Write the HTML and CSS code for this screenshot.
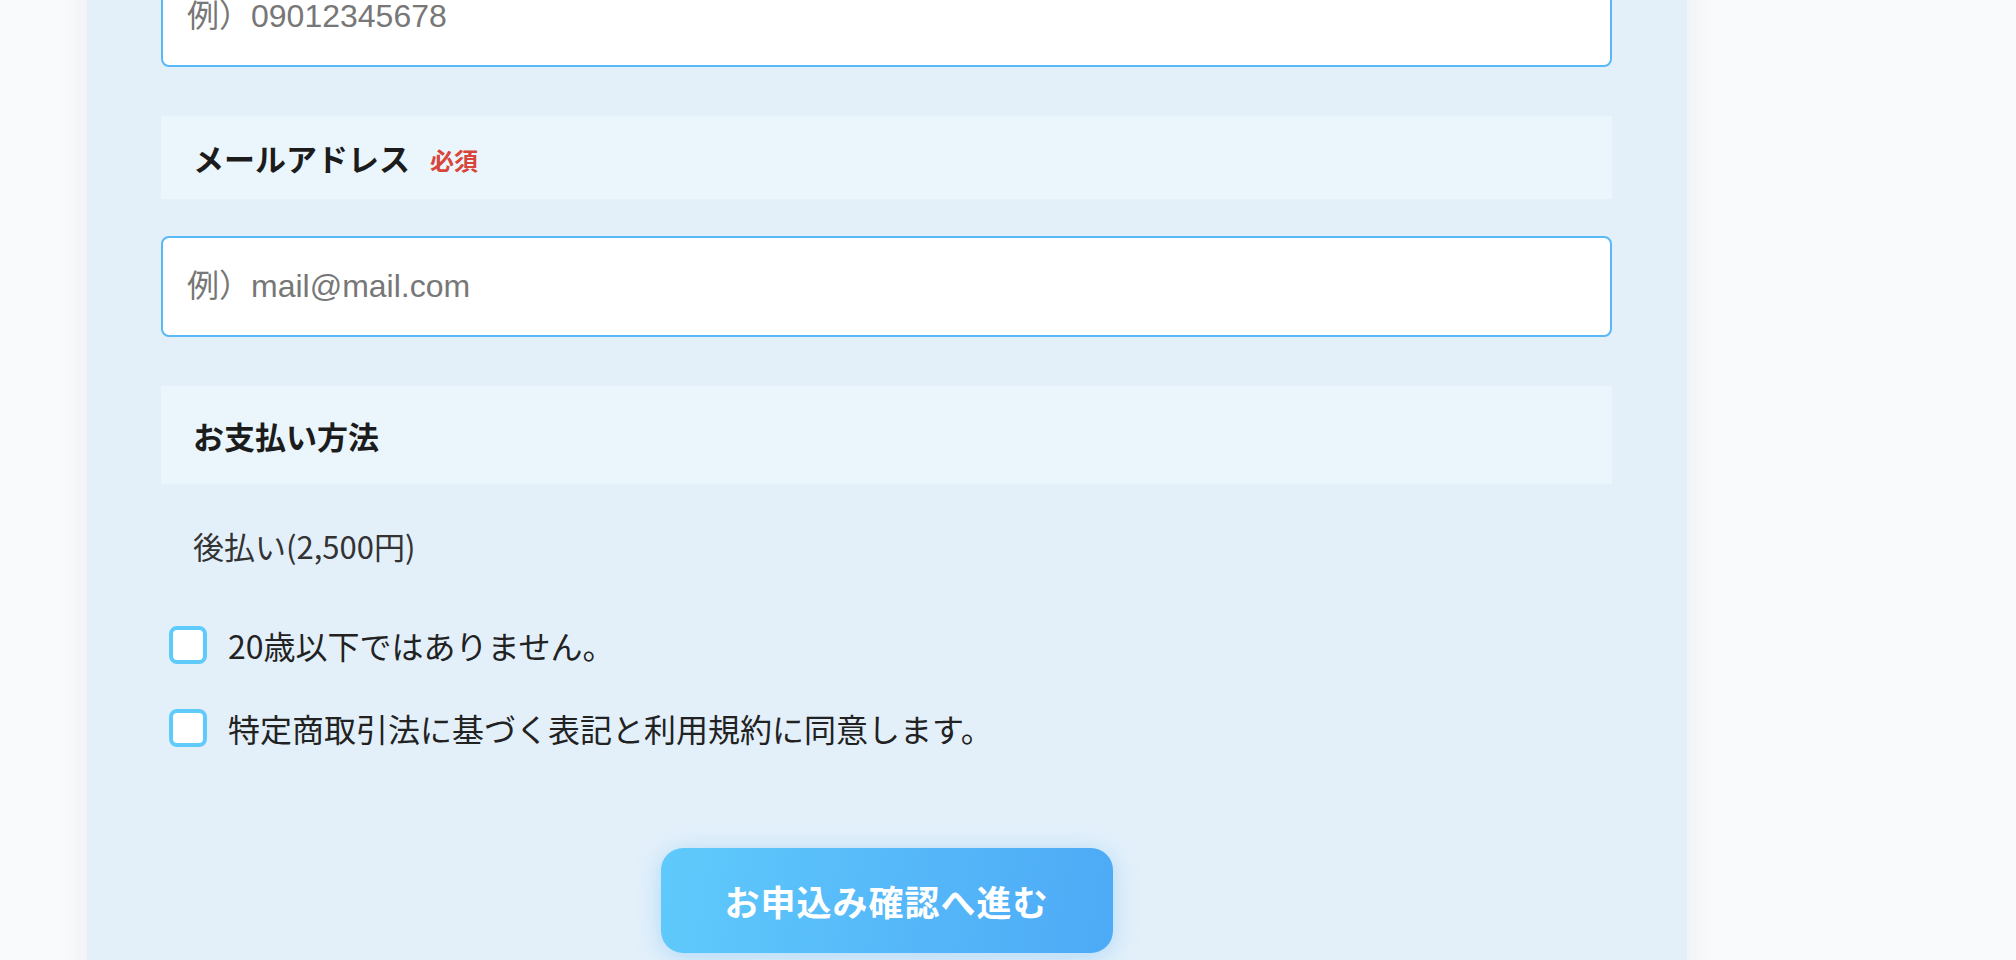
FILE: index.html
```html
<!DOCTYPE html>
<html lang="ja">
<head>
<meta charset="utf-8">
<title>お申込みフォーム</title>
<link rel="stylesheet" href="styles.css">
</head>
<body>
<div class="page">
  <form class="panel">
    <input class="field-input" type="tel" placeholder="例）09012345678">

    <div class="field-label field-label--short">
      <span class="label-text">メールアドレス</span>
      <span class="required">必須</span>
    </div>
    <input class="field-input field-input--gap" type="email" placeholder="例）mail@mail.com">

    <div class="field-label field-label--tall">
      <span class="label-text">お支払い方法</span>
    </div>
    <p class="payment">後払い(2,500円)</p>

    <label class="check-row check-row--first">
      <input class="check" type="checkbox">
      <span class="check-text">20歳以下ではありません。</span>
    </label>
    <label class="check-row">
      <input class="check" type="checkbox">
      <span class="check-text">特定商取引法に基づく表記と利用規約に同意します。</span>
    </label>

    <div class="actions">
      <button class="submit" type="button">お申込み確認へ進む</button>
    </div>
  </form>
</div>
</body>
</html>
```
FILE: styles.css
```css
html, body {
  margin: 0;
  padding: 0;
  background: #f8fafc;
  overflow: hidden;
}

body {
  font-family: "Noto Sans CJK JP", "Liberation Sans", sans-serif;
  color: #222;
}

.page {
  display: flex;
  padding-left: 87px;
  height: 960px;
}

.panel {
  box-sizing: border-box;
  width: 1600px;
  margin-top: -34px;
  padding: 0 75px 0 74px;
  background: #e3f0fa;
  box-shadow: 0 0 28px rgba(40, 60, 90, 0.07);
  display: flex;
  flex-direction: column;
  min-height: 1100px;
}

.field-input {
  box-sizing: border-box;
  display: block;
  width: 100%;
  height: 101px;
  margin: 0;
  padding: 0 24px;
  border: 2px solid #58b9f6;
  border-radius: 8px;
  background: #fff;
  font-family: "Liberation Sans", "Noto Sans CJK JP", sans-serif;
  font-size: 32px;
  color: #333;
  outline: none;
}

.field-input::placeholder {
  color: #777;
  opacity: 1;
}

.field-input--gap {
  margin-top: 37px;
}

.field-label {
  box-sizing: border-box;
  display: flex;
  align-items: center;
  gap: 20px;
  margin-top: 49px;
  padding-left: 32px;
  background: #eaf6fc;
}

.field-label--short {
  height: 83px;
}

.field-label--tall {
  height: 98px;
}

.label-text {
  font-size: 31px;
  font-weight: 700;
  color: #1c1c1c;
  line-height: 1;
}

.required {
  font-size: 24px;
  font-weight: 700;
  color: #d8463b;
  line-height: 1;
  padding-top: 4px;
}

.payment {
  margin: 46px 0 0;
  padding-left: 32px;
  font-size: 31px;
  line-height: 32px;
  color: #333;
}

.check-row {
  display: flex;
  align-items: center;
  gap: 21px;
  height: 38px;
  margin-top: 45px;
  padding-left: 8px;
  cursor: pointer;
}

.check-row--first {
  margin-top: 64px;
}

.check {
  appearance: none;
  -webkit-appearance: none;
  box-sizing: border-box;
  width: 38px;
  height: 38px;
  margin: 0;
  flex: none;
  border: 4px solid #5fcbfb;
  border-radius: 8px;
  background: #fff;
}

.check-text {
  font-size: 32px;
  line-height: 38px;
  color: #222;
}

.actions {
  display: flex;
  justify-content: center;
  margin-top: 101px;
}

.submit {
  width: 452px;
  height: 105px;
  border: none;
  border-radius: 22px;
  background: linear-gradient(100deg, #5fcafb 0%, #56b9f9 50%, #4daaf6 100%);
  box-shadow: 0 4px 24px rgba(80, 175, 245, 0.35);
  color: #fff;
  font-family: "Noto Sans CJK JP", sans-serif;
  font-size: 35px;
  font-weight: 700;
  letter-spacing: 1px;
  cursor: pointer;
}
```
